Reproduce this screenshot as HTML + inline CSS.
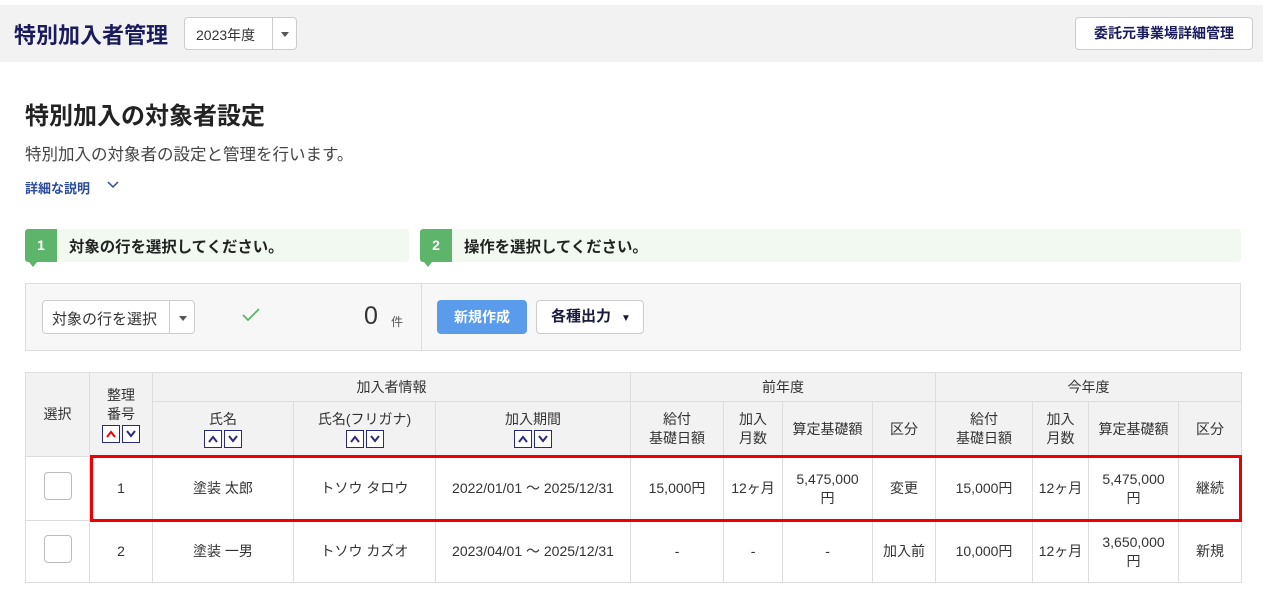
<!DOCTYPE html><html><head><meta charset="utf-8"><style>
*{box-sizing:border-box;margin:0;padding:0}
body{width:1263px;height:592px;overflow:hidden;background:#fff;font-family:"Liberation Sans","Noto Sans CJK JP",sans-serif;color:#333;position:relative}
.a{position:absolute}
.top{left:0;top:5px;width:1263px;height:57px;background:#f2f2f2}
.btn{border:1px solid #ccc;border-radius:4px;background:#fff}
table{position:absolute;left:25px;top:372px;border-collapse:collapse;font-size:14px;color:#333;table-layout:fixed;width:1217px}
td,th{border:1px solid #ddd;text-align:center;vertical-align:middle;font-weight:normal;line-height:19px;white-space:nowrap}
th{background:#f2f2f2}
.s{display:inline-block;width:18px;height:18px;border:1px solid #2a2a7a;background:#fff;margin:0 1px;vertical-align:middle;position:relative}
.s svg{position:absolute;left:2px;top:3px}
.cb{display:inline-block;width:28px;height:28px;border:1px solid #bbb;border-radius:4px;background:#fff}
</style></head><body>
<div class="a top"></div>
<div class="a" style="left:14px;top:18px;font-size:22px;font-weight:bold;color:#1a1a5e">特別加入者管理</div>
<div class="a btn" style="left:184px;top:17px;width:113px;height:33px"><span class="a" style="left:11px;top:7px;font-size:14px">2023年度</span><div class="a" style="left:87px;top:0;width:1px;height:31px;background:#ccc"></div><div class="a" style="left:96px;top:14px;border-left:4px solid transparent;border-right:4px solid transparent;border-top:5px solid #555"></div></div>
<div class="a btn" style="left:1075px;top:17px;width:178px;height:33px;text-align:center;line-height:31px;font-size:14px;font-weight:bold;color:#1a1a5e">委託元事業場詳細管理</div>
<div class="a" style="left:25px;top:96px;font-size:24px;font-weight:bold;color:#222">特別加入の対象者設定</div>
<div class="a" style="left:25px;top:141px;font-size:16.5px;color:#444">特別加入の対象者の設定と管理を行います。</div>
<div class="a" style="left:25px;top:178px;font-size:13px;font-weight:bold;color:#2a4a9a">詳細な説明</div>
<svg class="a" style="left:107px;top:181px" width="12" height="8"><path d="M1 1L6 6L11 1" stroke="#2a4a9a" stroke-width="1.5" fill="none"/></svg>
<div class="a" style="left:25px;top:229px;width:384px;height:33px;background:#f1f9f1;border-radius:3px"></div>
<div class="a" style="left:25px;top:229px;width:32px;height:33px;background:#5cb56b;color:#fff;font-weight:bold;text-align:center;line-height:33px;font-size:14px;border-radius:3px 0 0 3px">1</div>
<div class="a" style="left:29px;top:262px;border-left:4px solid transparent;border-right:4px solid transparent;border-top:5px solid #5cb56b"></div>
<div class="a" style="left:69px;top:235px;font-size:15.4px;font-weight:bold;color:#222">対象の行を選択してください。</div>
<div class="a" style="left:420px;top:229px;width:821px;height:33px;background:#f1f9f1;border-radius:3px"></div>
<div class="a" style="left:420px;top:229px;width:32px;height:33px;background:#5cb56b;color:#fff;font-weight:bold;text-align:center;line-height:33px;font-size:14px;border-radius:3px 0 0 3px">2</div>
<div class="a" style="left:424px;top:262px;border-left:4px solid transparent;border-right:4px solid transparent;border-top:5px solid #5cb56b"></div>
<div class="a" style="left:464px;top:235px;font-size:15.4px;font-weight:bold;color:#222">操作を選択してください。</div>
<div class="a" style="left:25px;top:283px;width:1216px;height:68px;background:#f7f7f7;border:1px solid #ddd"></div>
<div class="a" style="left:421px;top:284px;width:1px;height:66px;background:#ddd"></div>
<div class="a btn" style="left:42px;top:300px;width:153px;height:34px"><span class="a" style="left:9px;top:7px;font-size:15px">対象の行を選択</span><div class="a" style="left:126px;top:0;width:1px;height:32px;background:#ccc"></div><div class="a" style="left:136px;top:15px;border-left:4px solid transparent;border-right:4px solid transparent;border-top:5px solid #555"></div></div>
<svg class="a" style="left:242px;top:308px" width="18" height="14"><path d="M1 7L6 12L17 1" stroke="#5cb56b" stroke-width="1.8" fill="none"/></svg>
<div class="a" style="left:364px;top:302px;font-size:25px;color:#333">0</div>
<div class="a" style="left:391px;top:313px;font-size:12px;color:#555">件</div>
<div class="a" style="left:437px;top:300px;width:90px;height:34px;background:#5a9bec;border-radius:4px;color:#fff;font-weight:bold;font-size:14px;text-align:center;line-height:34px">新規作成</div>
<div class="a btn" style="left:536px;top:300px;width:108px;height:34px;font-weight:bold;font-size:15px;color:#1a1a3e;line-height:32px;padding-left:14px">各種出力<span style="font-size:10px;margin-left:10px">▼</span></div>
<table>
<colgroup><col style="width:64px"><col style="width:63px"><col style="width:141px"><col style="width:142px"><col style="width:195px"><col style="width:93px"><col style="width:59px"><col style="width:90px"><col style="width:63px"><col style="width:97px"><col style="width:56px"><col style="width:90px"><col style="width:63px"></colgroup>
<tr style="height:29px"><th rowspan="2">選択</th><th rowspan="2">整理<br>番号<br><span class="s"><svg width="12" height="10"><path d="M2 8L6 3L10 8" stroke="#e00" stroke-width="2" fill="none"/></svg></span><span class="s"><svg width="12" height="10"><path d="M2 2L6 7L10 2" stroke="#2a2a7a" stroke-width="2" fill="none"/></svg></span></th><th colspan="3">加入者情報</th><th colspan="4">前年度</th><th colspan="4">今年度</th></tr>
<tr style="height:55px"><th>氏名<br><span class="s"><svg width="12" height="10"><path d="M2 8L6 3L10 8" stroke="#2a2a7a" stroke-width="2" fill="none"/></svg></span><span class="s"><svg width="12" height="10"><path d="M2 2L6 7L10 2" stroke="#2a2a7a" stroke-width="2" fill="none"/></svg></span></th><th>氏名(フリガナ)<br><span class="s"><svg width="12" height="10"><path d="M2 8L6 3L10 8" stroke="#2a2a7a" stroke-width="2" fill="none"/></svg></span><span class="s"><svg width="12" height="10"><path d="M2 2L6 7L10 2" stroke="#2a2a7a" stroke-width="2" fill="none"/></svg></span></th><th>加入期間<br><span class="s"><svg width="12" height="10"><path d="M2 8L6 3L10 8" stroke="#2a2a7a" stroke-width="2" fill="none"/></svg></span><span class="s"><svg width="12" height="10"><path d="M2 2L6 7L10 2" stroke="#2a2a7a" stroke-width="2" fill="none"/></svg></span></th><th>給付<br>基礎日額</th><th>加入<br>月数</th><th>算定基礎額</th><th>区分</th><th>給付<br>基礎日額</th><th>加入<br>月数</th><th>算定基礎額</th><th>区分</th></tr>
<tr style="height:64px"><td><span class="cb"></span></td><td>1</td><td>塗装 太郎</td><td>トソウ タロウ</td><td>2022/01/01 ～ 2025/12/31</td><td>15,000円</td><td>12ヶ月</td><td>5,475,000<br>円</td><td>変更</td><td>15,000円</td><td>12ヶ月</td><td>5,475,000<br>円</td><td>継続</td></tr>
<tr style="height:62px"><td><span class="cb"></span></td><td>2</td><td>塗装 一男</td><td>トソウ カズオ</td><td>2023/04/01 ～ 2025/12/31</td><td>-</td><td>-</td><td>-</td><td>加入前</td><td>10,000円</td><td>12ヶ月</td><td>3,650,000<br>円</td><td>新規</td></tr>
</table>
<div class="a" style="left:90px;top:455px;width:1152px;height:67px;border:3px solid #e00"></div>
</body></html>
